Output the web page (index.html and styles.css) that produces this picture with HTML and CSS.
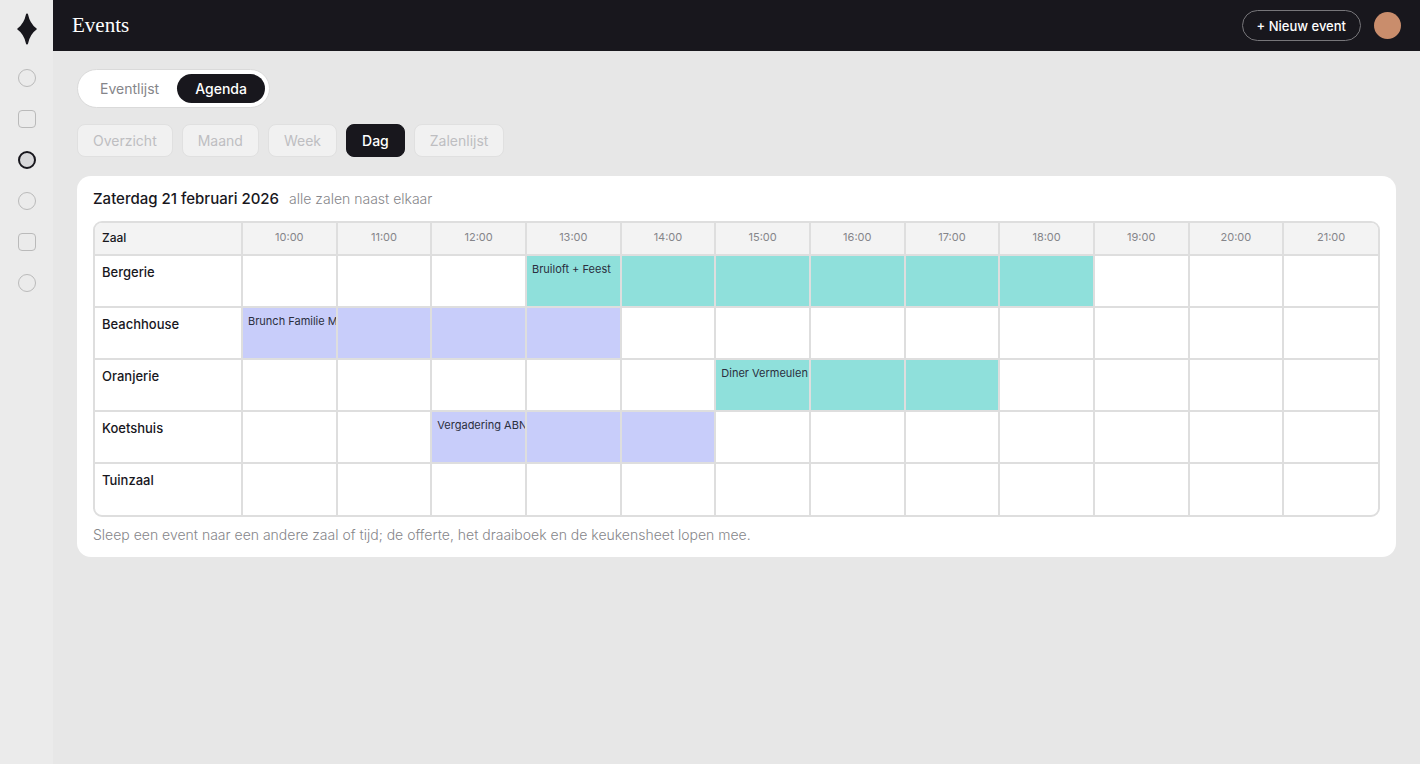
FILE: index.html
```html
<!DOCTYPE html>
<html lang="nl">
<head>
    <meta charset="UTF-8">
    <meta name="viewport" content="width=device-width, initial-scale=1.0">
    <title>Events</title>
    <link rel="stylesheet" href="styles.css">
</head>
<body>
    <nav class="sidebar" aria-label="Hoofdmenu">
        <svg class="logo" width="20" height="32" viewBox="0 0 20 32" aria-hidden="true">
            <path d="M10 1.5 C11.6 9 13.8 12.6 18.7 16 C13.8 19.4 11.6 23 10 30.5 C8.4 23 6.2 19.4 1.3 16 C6.2 12.6 8.4 9 10 1.5 Z" fill="#18171d" stroke="#18171d" stroke-width="2" stroke-linejoin="round"/>
        </svg>
        <a href="#" class="nav-icon round" aria-label="Dashboard"></a>
        <a href="#" class="nav-icon" aria-label="Offertes"></a>
        <a href="#" class="nav-icon round active" aria-label="Events"></a>
        <a href="#" class="nav-icon round" aria-label="Relaties"></a>
        <a href="#" class="nav-icon" aria-label="Keuken"></a>
        <a href="#" class="nav-icon round" aria-label="Instellingen"></a>
    </nav>
    <div class="page">
        <header class="topbar">
            <h1>Events</h1>
            <button type="button" class="new-event">+ Nieuw event</button>
            <span class="avatar"></span>
        </header>
        <main>
            <div class="switch">
                <button type="button">Eventlijst</button>
                <button type="button" class="active">Agenda</button>
            </div>
            <div class="views">
                <button type="button">Overzicht</button>
                <button type="button">Maand</button>
                <button type="button">Week</button>
                <button type="button" class="active">Dag</button>
                <button type="button">Zalenlijst</button>
            </div>
            <section class="card">
                <div class="card-head">
                    <h2>Zaterdag 21 februari 2026</h2>
                    <span>alle zalen naast elkaar</span>
                </div>
                <div class="planner-frame">
                    <table class="planner">
                        <thead>
                            <tr>
                                <th class="room">Zaal</th>
                                <th>10:00</th><th>11:00</th><th>12:00</th><th>13:00</th>
                                <th>14:00</th><th>15:00</th><th>16:00</th><th>17:00</th>
                                <th>18:00</th><th>19:00</th><th>20:00</th><th>21:00</th>
                            </tr>
                        </thead>
                        <tbody>
                            <tr>
                                <th class="room">Bergerie</th>
                                <td></td><td></td><td></td>
                                <td class="teal">Bruiloft + Feest</td><td class="teal"></td><td class="teal"></td>
                                <td class="teal"></td><td class="teal"></td><td class="teal"></td>
                                <td></td><td></td><td></td>
                            </tr>
                            <tr>
                                <th class="room">Beachhouse</th>
                                <td class="lilac">Brunch Familie M</td><td class="lilac"></td><td class="lilac"></td><td class="lilac"></td>
                                <td></td><td></td><td></td><td></td><td></td><td></td><td></td><td></td>
                            </tr>
                            <tr>
                                <th class="room">Oranjerie</th>
                                <td></td><td></td><td></td><td></td><td></td>
                                <td class="teal">Diner Vermeulen</td><td class="teal"></td><td class="teal"></td>
                                <td></td><td></td><td></td><td></td>
                            </tr>
                            <tr>
                                <th class="room">Koetshuis</th>
                                <td></td><td></td>
                                <td class="lilac">Vergadering ABN</td><td class="lilac"></td><td class="lilac"></td>
                                <td></td><td></td><td></td><td></td><td></td><td></td><td></td>
                            </tr>
                            <tr>
                                <th class="room">Tuinzaal</th>
                                <td></td><td></td><td></td><td></td><td></td><td></td>
                                <td></td><td></td><td></td><td></td><td></td><td></td>
                            </tr>
                        </tbody>
                    </table>
                </div>
                <p class="hint">Sleep een event naar een andere zaal of tijd; de offerte, het draaiboek en de keukensheet lopen mee.</p>
            </section>
        </main>
    </div>
</body>
</html>
```
FILE: styles.css
```css
* {
    box-sizing: border-box;
}
body {
    margin: 0;
    display: flex;
    min-height: 100vh;
    background-color: #e7e7e7;
    color: #18171d;
    font-family: Inter, sans-serif;
    font-size: 14px;
}
button {
    font: inherit;
    cursor: pointer;
}

/* sidebar */
.sidebar {
    flex: none;
    width: 53px;
    padding-top: 13px;
    display: flex;
    flex-direction: column;
    align-items: center;
    gap: 23px;
    background-color: #ebebeb;
}
.logo {
    margin-bottom: 1px;
}
.nav-icon {
    width: 18px;
    height: 18px;
    border: 1px solid #bababa;
    border-radius: 4px;
}
.nav-icon.round {
    border-radius: 50%;
}
.nav-icon.active {
    border: 2px solid #18171d;
    background-color: #d8d8da;
}

/* top bar */
.page {
    flex: 1;
    min-width: 0;
}
.topbar {
    display: flex;
    align-items: center;
    height: 51px;
    padding: 0 19px;
    background-color: #18171d;
    color: #fff;
}
.topbar h1 {
    margin: 0;
    flex: 1;
    font-family: "Liberation Serif", serif;
    font-size: 21px;
    font-weight: normal;
}
.new-event {
    height: 31px;
    padding: 0 14px;
    border: 1px solid #77767a;
    border-radius: 16px;
    background: none;
    color: #fff;
    font-size: 13px;
    font-weight: 500;
}
.avatar {
    width: 27px;
    height: 27px;
    margin-left: 13px;
    border-radius: 50%;
    background-color: #c98d6c;
}

/* switches */
main {
    padding: 18px 24px;
}
.switch {
    display: flex;
    width: fit-content;
    padding: 4px;
    border: 1px solid #dadada;
    border-radius: 20px;
    background-color: #fff;
}
.switch button {
    height: 29px;
    padding: 0 18px;
    border: 0;
    border-radius: 15px;
    background: none;
    color: #85858a;
}
.switch button.active {
    background-color: #18171d;
    color: #fff;
    font-weight: 500;
}
.views {
    display: flex;
    gap: 9px;
    margin: 16px 0 19px;
}
.views button {
    height: 33px;
    padding: 0 15px;
    border: 1px solid #e0e0e0;
    border-radius: 8px;
    background-color: #f1f1f1;
    color: #bebec1;
}
.views button.active {
    border-color: #18171d;
    background-color: #18171d;
    color: #fff;
    font-weight: 500;
}

/* day planner */
.card {
    padding: 13px 16px 12px;
    border-radius: 14px;
    background-color: #fff;
}
.card-head {
    display: flex;
    align-items: baseline;
    gap: 10px;
    margin-bottom: 12px;
    line-height: 20px;
    font-weight: 300;
    color: #86868a;
}
.card-head h2 {
    margin: 0;
    font-size: 15px;
    font-weight: 500;
    color: #18171d;
}
.planner-frame {
    border: 2px solid #dedede;
    border-radius: 9px;
    overflow: hidden;
}
.planner {
    width: 100%;
    table-layout: fixed;
    border-collapse: collapse;
}
.planner th,
.planner td {
    height: 52px;
    padding: 5px;
    border-right: 2px solid #dedede;
    border-bottom: 2px solid #dedede;
    overflow: hidden;
    white-space: nowrap;
    vertical-align: top;
    text-align: left;
    font-size: 11px;
    line-height: 16px;
    font-weight: normal;
    color: #2b2f40;
}
.planner th:last-child,
.planner td:last-child {
    border-right: 0;
}
.planner tbody tr:last-child > * {
    border-bottom: 0;
}
.planner thead th {
    height: 32px;
    padding: 6px 0;
    background-color: #f3f3f3;
    text-align: center;
    color: #85858a;
}
.planner .room {
    width: 147px;
    padding: 8px 7px;
    text-align: left;
    font-size: 13px;
    font-weight: 500;
    color: #18171d;
}
.planner thead .room {
    padding: 7px;
    font-size: 12px;
}
.planner .teal {
    background-color: #8fe0db;
}
.planner .lilac {
    background-color: #c8cdfa;
}
.hint {
    margin: 8px 0 0;
    line-height: 20px;
    font-weight: 300;
    color: #86868a;
}
```
